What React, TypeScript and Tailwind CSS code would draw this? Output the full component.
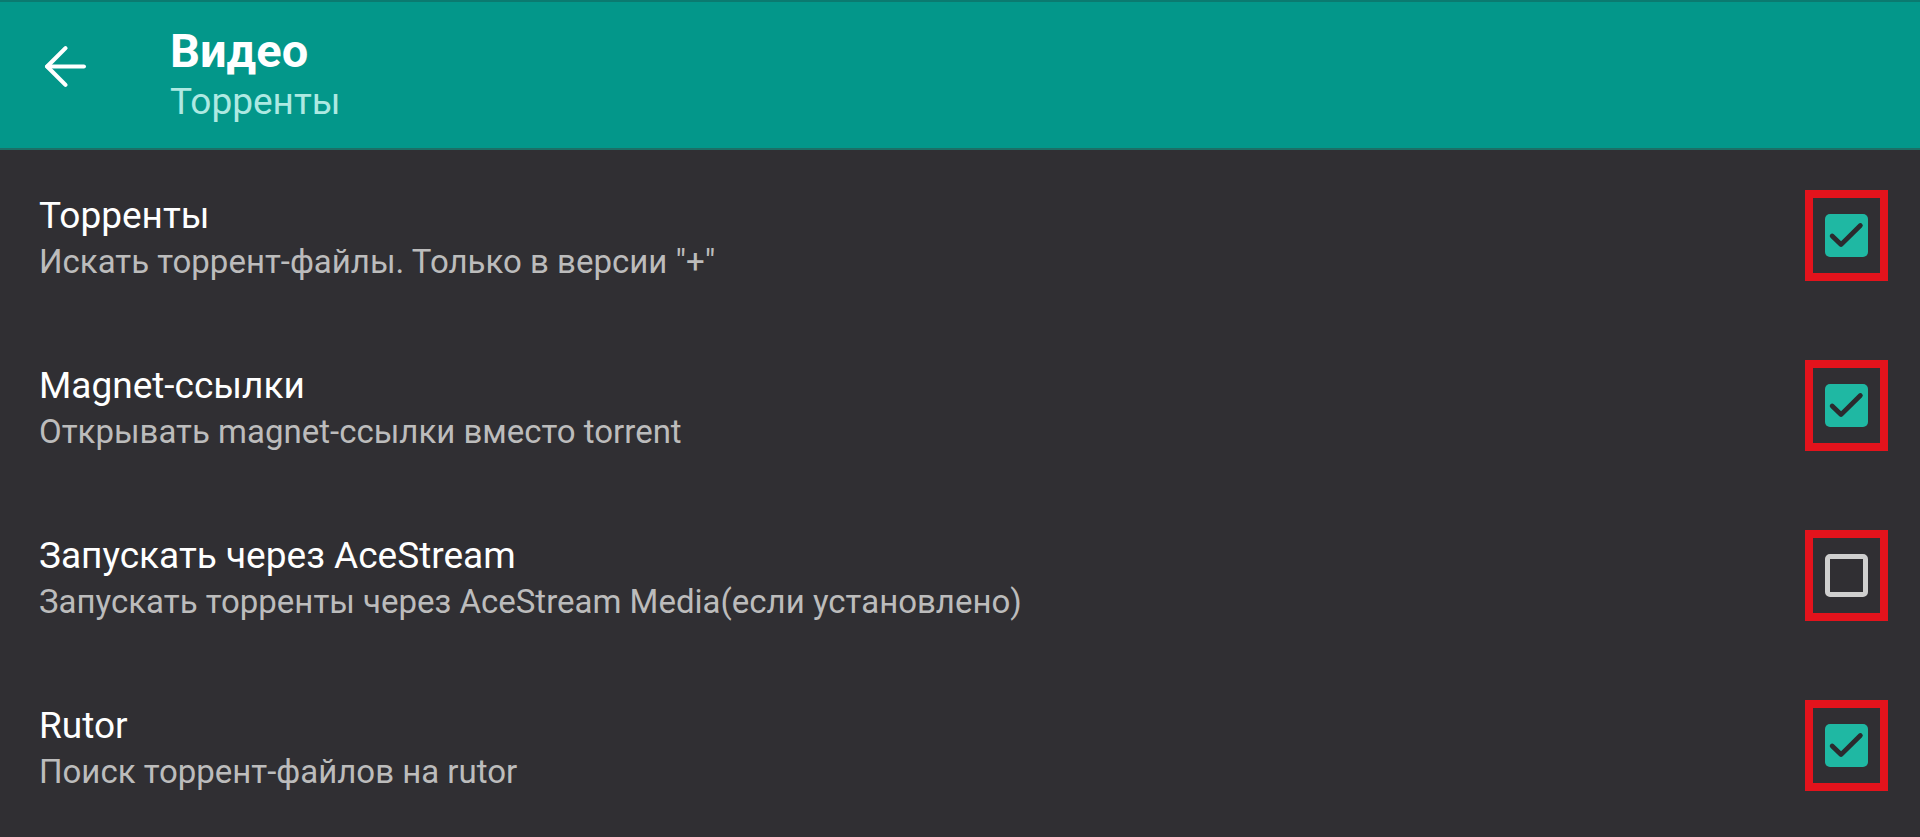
import { ArrowLeft } from 'lucide-react';

type Pref = {
  title: string;
  summary: string;
  checked: boolean;
};

const PREFS: Pref[] = [
  { title: 'Торренты', summary: 'Искать торрент-файлы. Только в версии "+"', checked: true },
  { title: 'Magnet-ссылки', summary: 'Открывать magnet-ссылки вместо torrent', checked: true },
  { title: 'Запускать через AceStream', summary: 'Запускать торренты через AceStream Media(если установлено)', checked: false },
  { title: 'Rutor', summary: 'Поиск торрент-файлов на rutor', checked: true },
];

function CheckBox({ checked }: { checked: boolean }) {
  if (!checked) {
    return <div className="w-[43px] h-[43px] rounded-[5px] border-[5px] border-[#cfcfcf]" />;
  }
  return (
    <div className="w-[43px] h-[43px] rounded-[5px] bg-[#1fb8a3] flex items-center justify-center">
      <svg width="43" height="43" viewBox="0 0 18 18" fill="none">
        <polyline
          points="3,9.2 6.7,12.8 14.8,4.8"
          stroke="#2b2a2e"
          strokeWidth="2"
          strokeLinecap="round"
          strokeLinejoin="round"
        />
      </svg>
    </div>
  );
}

function PrefRow({ pref }: { pref: Pref }) {
  return (
    <div className="h-[170px] flex items-center justify-between pl-[39px] pr-[32px]">
      <div className="flex flex-col pt-[8px]">
        <div className="text-[37px] leading-[46px] text-white">{pref.title}</div>
        <div className="text-[33px] leading-[46px] text-[#bcbcbc]">{pref.summary}</div>
      </div>
      {/* red highlight frame around the checkbox */}
      <div className="w-[83px] h-[91px] border-[8px] border-[#e3131c] flex items-center justify-center">
        <CheckBox checked={pref.checked} />
      </div>
    </div>
  );
}

export default function App() {
  return (
    <div
      className="w-[1920px] h-[837px] overflow-hidden bg-[#302f33]"
      style={{ fontFamily: 'Roboto, "Noto Sans", sans-serif' }}
    >
      <header className="h-[150px] bg-[#03978a] border-t-2 border-[#0b7a70] border-b-2 border-b-[#1c6f66] flex items-center">
        <div className="w-[170px] flex items-center pl-[34px]">
          <ArrowLeft size={63} strokeWidth={1.6} className="text-white mb-[18px]" />
        </div>
        <div className="flex flex-col">
          <div className="text-[47px] leading-[54px] font-bold text-white">Видео</div>
          <div className="text-[37px] leading-[48px] text-[#aee9e2]">Торренты</div>
        </div>
      </header>
      <main className="flex flex-col">
        {PREFS.map((p) => (
          <PrefRow key={p.title} pref={p} />
        ))}
      </main>
    </div>
  );
}
